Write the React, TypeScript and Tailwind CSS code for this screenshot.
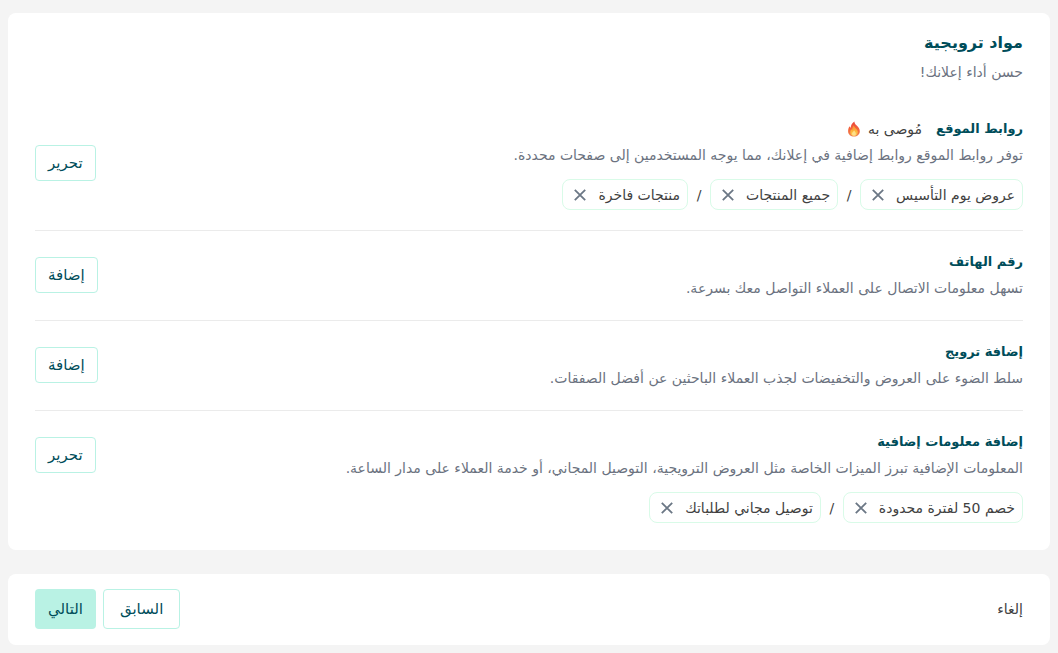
import type { ReactNode } from "react";

type Extension = {
  title: string;
  text: string;
  action: string;
  recommended?: boolean;
  chips?: string[];
};

const siteLinks: Extension = {
  title: "روابط الموقع",
  text: "توفر روابط الموقع روابط إضافية في إعلانك، مما يوجه المستخدمين إلى صفحات محددة.",
  action: "تحرير",
  recommended: true,
  chips: ["عروض يوم التأسيس", "جميع المنتجات", "منتجات فاخرة"],
};

const simpleItems: Extension[] = [
  {
    title: "رقم الهاتف",
    text: "تسهل معلومات الاتصال على العملاء التواصل معك بسرعة.",
    action: "إضافة",
  },
  {
    title: "إضافة ترويج",
    text: "سلط الضوء على العروض والتخفيضات لجذب العملاء الباحثين عن أفضل الصفقات.",
    action: "إضافة",
  },
];

const callouts: Extension = {
  title: "إضافة معلومات إضافية",
  text: "المعلومات الإضافية تبرز الميزات الخاصة مثل العروض الترويجية، التوصيل المجاني، أو خدمة العملاء على مدار الساعة.",
  action: "تحرير",
  chips: ["خصم 50 لفترة محدودة", "توصيل مجاني لطلباتك"],
};

function Flame() {
  return (
    <svg viewBox="0 0 14 16" className="h-4 w-[14px]" aria-hidden="true">
      <defs>
        <linearGradient id="flame" x1="0" y1="0" x2="0" y2="1">
          <stop offset="0" stopColor="#e8413a" />
          <stop offset="0.5" stopColor="#f4643a" />
          <stop offset="1" stopColor="#ef8350" />
        </linearGradient>
        <linearGradient id="flame-core" x1="0" y1="0" x2="0" y2="1">
          <stop offset="0" stopColor="#f98a35" />
          <stop offset="0.6" stopColor="#fdb83c" />
          <stop offset="1" stopColor="#fdc95a" />
        </linearGradient>
      </defs>
      <path
        d="M7.400.4c0 1.900 1 2.900 2.300 4.100 1.700 1.600 3.100 3.300 3.100 5.800 0 3.200-2.400 5.300-5.700 5.300S1.100 13.400 1.100 10.200c0-1.900.6-3.700 1.500-5 .2.700.5 1.200 1 1.500C4 3.900 5.200 1.700 7.400.4Z"
        fill="url(#flame)"
      />
      <path
        d="M6.900 4.200c.2 1.900 1.400 2.500 2.500 3.700.8.900 1.400 1.900 1.400 3.200 0 2.400-1.500 3.900-3.700 3.900s-3.800-1.500-3.800-3.700c0-1.300.5-2.200 1-3 .3.500.600.700.9.800.1-2 .6-3.600 1.700-4.900Z"
        fill="url(#flame-core)"
      />
      <path
        d="M7.100 9.200c.3 1.100 1.800 1.900 1.800 3.500 0 1.200-.8 2-1.900 2s-2-.8-2-2c0-1.400 1.500-2.100 2.100-3.500Z"
        fill="#fee08a"
      />
    </svg>
  );
}

function Chips({ items }: { items: string[] }) {
  return (
    <div className="mt-[11px] flex flex-wrap items-center gap-y-2">
      {items.map((item, i) => (
        <div key={item} className="flex items-center">
          {i > 0 && <span className="w-[22px] text-center text-sm text-[#414141]">/</span>}
          <span className="flex h-[31px] items-center gap-3 rounded-lg border border-[#d9fbe8] pr-[7px] pl-[11px] text-sm text-[#414141]">
            {item}
            <button type="button" aria-label={`حذف ${item}`} className="cursor-pointer">
              <svg viewBox="0 0 12 12" className="size-3" stroke="#6b7785" strokeWidth="1.8">
                <path d="M.8.8l10.400 10.400M11.200.8L.8 11.200" />
              </svg>
            </button>
          </span>
        </div>
      ))}
    </div>
  );
}

function Info({ item, children }: { item: Extension; children?: ReactNode }) {
  return (
    <div className="flex items-center justify-between gap-6">
      <div>
        <div className="flex items-center gap-[14px]">
          <h3 className="text-[13px] leading-[26px] font-bold text-[#004d5a]">{item.title}</h3>
          {item.recommended && (
            <span className="flex items-center gap-[7px] text-sm leading-[26px] text-[#414141]">
              مُوصى به
              <Flame />
            </span>
          )}
        </div>
        <p className="text-sm leading-[26px] text-[#6b7280]">{item.text}</p>
        {children}
      </div>
      <button
        type="button"
        className="h-9 shrink-0 cursor-pointer rounded border border-[#b9f2e4] px-3 text-[15px] text-[#004d5a]"
      >
        {item.action}
      </button>
    </div>
  );
}

export default function App() {
  return (
    <main
      dir="rtl"
      lang="ar"
      className="min-h-screen bg-[#f4f4f4] px-2 pt-[13px] pb-2 font-['DejaVu_Sans',sans-serif]"
    >
      <section className="rounded-lg bg-white px-[27px] pt-4 pb-[27px]">
        <h2 className="text-base leading-7 font-bold text-[#004d5a]">مواد ترويجية</h2>
        <p className="text-sm leading-[30px] text-[#6b7280]">حسن أداء إعلانك!</p>

        <div className="border-b border-[#ebebeb] pt-[29px] pb-5">
          <Info item={siteLinks}>
            <Chips items={siteLinks.chips ?? []} />
          </Info>
        </div>
        {simpleItems.map((item) => (
          <div key={item.title} className="border-b border-[#ebebeb] pt-[18px] pb-[19px]">
            <Info item={item} />
          </div>
        ))}
        <div className="pt-[18px]">
          <Info item={callouts} />
          <Chips items={callouts.chips ?? []} />
        </div>
      </section>

      <footer className="mt-6 flex items-center justify-between rounded-lg bg-white px-[27px] pt-[15px] pb-4">
        <button type="button" className="cursor-pointer text-sm text-[#414141]">
          إلغاء
        </button>
        <div className="flex gap-[7px]">
          <button
            type="button"
            className="h-10 cursor-pointer rounded border border-[#b9f2e4] px-4 text-[15px] text-[#004d5a]"
          >
            السابق
          </button>
          <button type="button" className="h-10 cursor-pointer rounded bg-[#b9f2e4] px-[13px] text-[15px] text-[#004d5a]">
            التالي
          </button>
        </div>
      </footer>
    </main>
  );
}
